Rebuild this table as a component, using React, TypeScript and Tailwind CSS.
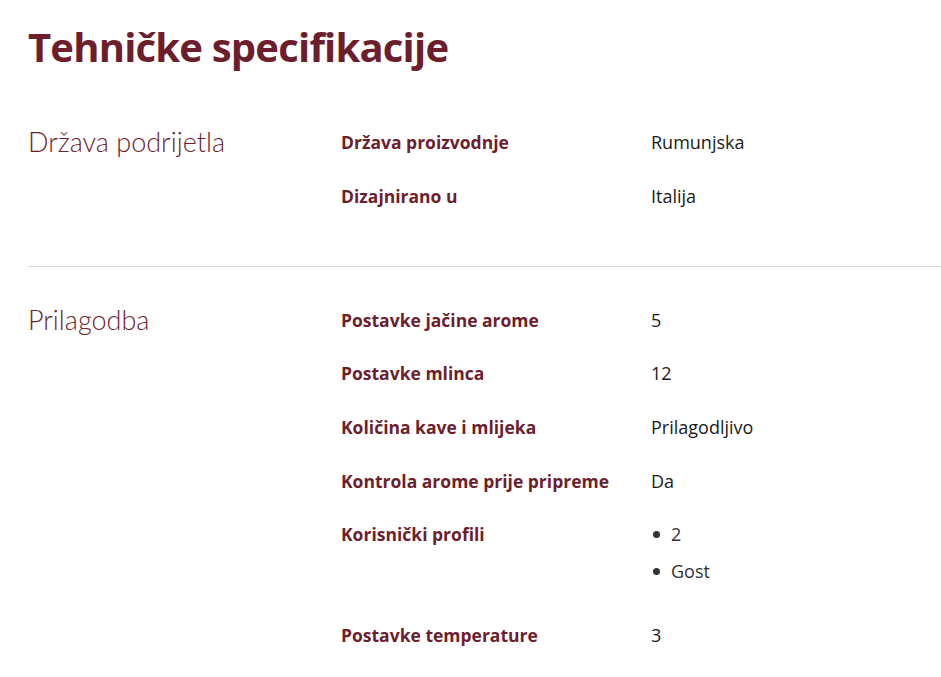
const sections = [
  {
    title: 'Država podrijetla',
    rows: [
      { label: 'Država proizvodnje', value: 'Rumunjska' },
      { label: 'Dizajnirano u', value: 'Italija' },
    ],
  },
  {
    title: 'Prilagodba',
    rows: [
      { label: 'Postavke jačine arome', value: '5' },
      { label: 'Postavke mlinca', value: '12' },
      { label: 'Količina kave i mlijeka', value: 'Prilagodljivo' },
      { label: 'Kontrola arome prije pripreme', value: 'Da' },
      { label: 'Korisnički profili', list: ['2', 'Gost'] },
      { label: 'Postavke temperature', value: '3' },
    ],
  },
]

type Row = { label: string; value?: string; list?: string[] }

const SpecRow = ({ row }: { row: Row }) => (
  <div className="flex mb-[29.7px] last:mb-0">
    <div className="w-[310px] shrink-0 text-[17.5px] leading-6 font-bold text-[#6d1e2c]">{row.label}</div>
    <div className="text-[18px] leading-6 text-[#1a1a1a]">
      {row.list ? (
        <ul className="flex flex-col gap-[13px] pb-[10px]">
          {row.list.map((item) => (
            <li key={item} className="flex items-center text-[#333]">
              <span className="w-[7px] h-[7px] rounded-full bg-[#333] ml-[2px] mr-[11px]" />
              {item}
            </li>
          ))}
        </ul>
      ) : (
        row.value
      )}
    </div>
  </div>
)

export default function App() {
  return (
    <div className="bg-white min-h-screen pl-[28px] pt-[18px]" style={{ fontFamily: '"Open Sans", sans-serif' }}>
      <h1 className="text-[40px] leading-[58px] font-bold text-[#6d1e2c] tracking-[-0.8px]">Tehničke specifikacije</h1>
      <div className="mt-[54px]">
        {sections.map((section, i) => (
          <div key={section.title} className={i > 0 ? 'border-t border-[#d9d9d9] pt-[41px]' : 'pb-[58px]'}>
            <div className="flex">
              <h2
                className="w-[313px] shrink-0 text-[27px] leading-6 font-light text-[#6d1e2c]"
                style={{ fontFamily: 'Lato, sans-serif' }}
              >
                {section.title}
              </h2>
              <div className="flex-1">
                {section.rows.map((row) => (
                  <SpecRow key={row.label} row={row} />
                ))}
              </div>
            </div>
          </div>
        ))}
      </div>
    </div>
  )
}
